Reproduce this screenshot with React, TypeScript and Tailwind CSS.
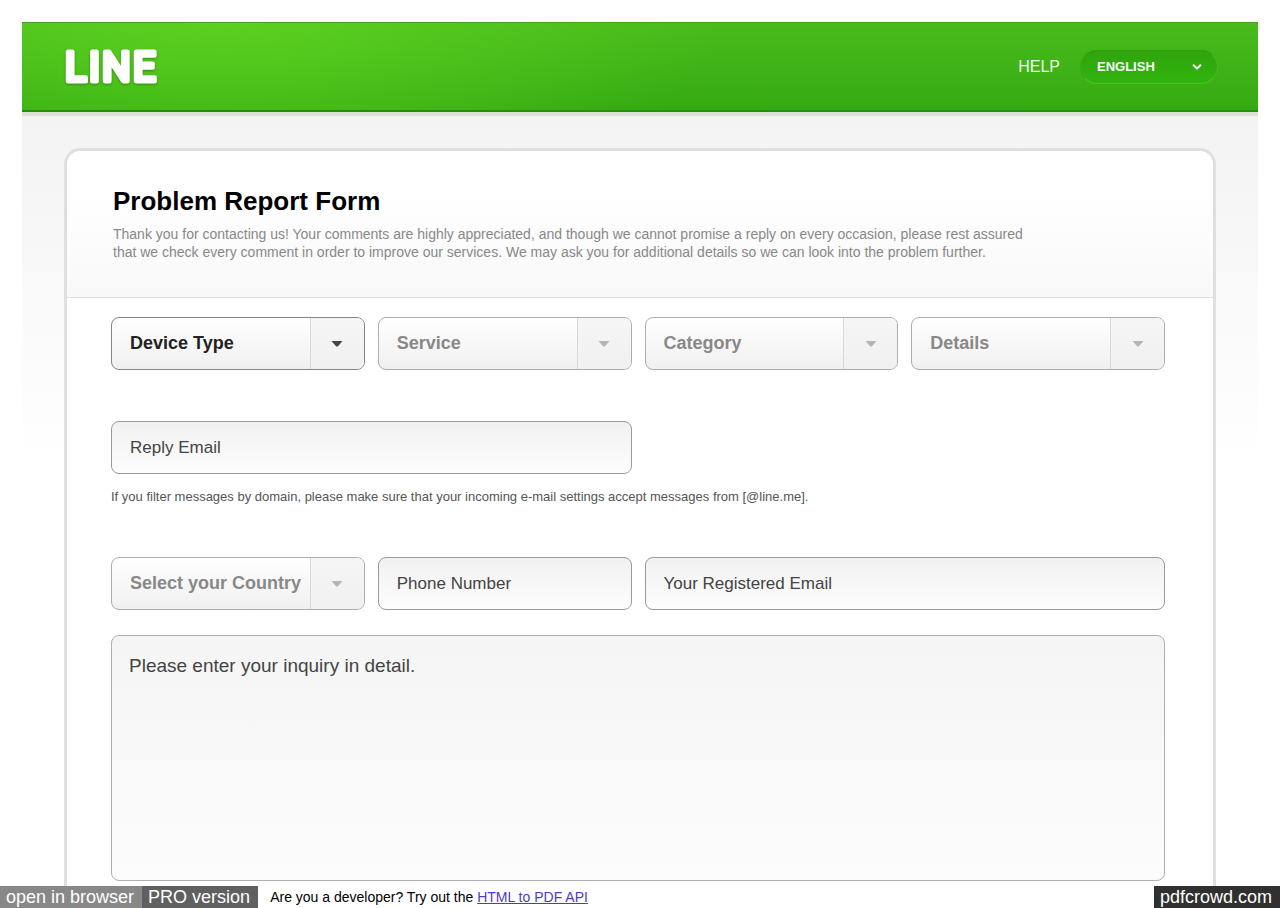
import { clsx } from "clsx";
import type { ComponentProps } from "react";

type SelectFieldProps = {
  id: string;
  label: string;
  disabled?: boolean;
};

function SelectField({ id, label, disabled }: SelectFieldProps) {
  return (
    <div
      className={clsx(
        "relative h-[53px] overflow-hidden rounded-lg border bg-linear-to-b from-white to-[#f0f0f0]",
        disabled ? "border-[#adadad]" : "border-[#858585]"
      )}
    >
      <select
        id={id}
        aria-label={label}
        disabled={disabled}
        className={clsx(
          "h-full w-full appearance-none bg-transparent pr-14 pb-0.5 pl-[18px] text-lg font-bold opacity-100 outline-none",
          disabled ? "text-[#888888]" : "text-[#222222]"
        )}
      >
        <option>{label}</option>
      </select>
      <span className="pointer-events-none absolute inset-y-0 right-0 flex w-[54px] items-center justify-center border-l border-[#d8d8d8] bg-linear-to-b from-[#f6f6f6] to-[#f0f0f0]">
        <svg
          width="12"
          height="6"
          viewBox="0 0 12 6"
          className={disabled ? "fill-[#b5b5b5]" : "fill-[#444444]"}
          aria-hidden="true"
        >
          <path d="M0.5 0h11L7 5.2Q6 6 5 5.2Z" />
        </svg>
      </span>
    </div>
  );
}

function TextField({ label, className, ...props }: ComponentProps<"input"> & { label: string }) {
  return (
    <input
      aria-label={label}
      placeholder={label}
      className={clsx(
        "block h-[53px] w-full rounded-lg border border-[#999999] bg-linear-to-b from-[#f1f1f1] to-[#fdfdfd] px-[18px] text-[17px] text-[#333333] outline-none placeholder:text-[#444444] placeholder:opacity-100",
        className
      )}
      {...props}
    />
  );
}

function Logo() {
  return (
    <a href="#" className="block">
      <svg
        width="104"
        height="46"
        viewBox="0 0 104 46"
        className="overflow-visible drop-shadow-[0_1px_1px_rgba(20,100,0,0.6)]"
      >
        <text
          y="37"
          x="1 25 38 69"
          fontFamily="Roboto, sans-serif"
          fontSize="40"
          fill="#ffffff"
          stroke="#ffffff"
          strokeWidth="5"
          strokeLinejoin="round"
        >
          LINE
        </text>
      </svg>
    </a>
  );
}

function Header() {
  return (
    <header className="flex h-[90px] items-center justify-between border-t border-b-2 border-t-[#3fa619] border-b-[#298c10] bg-[radial-gradient(ellipse_500px_180px_at_200px_0px,rgba(101,220,34,0.65),transparent),linear-gradient(to_bottom,#4abb1c,#34aa12)] pr-10 pl-[42px]">
      <Logo />
      <nav className="flex items-center gap-5">
        <a href="#" className="text-base text-[#f0ffe8]">
          HELP
        </a>
        <div className="relative h-[34px] w-[138px] rounded-full border border-t-[#2f9d0d] border-r-[#43bd1e] border-b-[#4cc426] border-l-[#38aa12] bg-linear-to-b from-[#2fa50d] to-[#33b30e]">
          <select
            id="language"
            aria-label="Language"
            className="h-full w-full appearance-none bg-transparent pl-4 text-[13px] font-bold text-white outline-none"
          >
            <option>ENGLISH</option>
          </select>
          <svg
            width="10"
            height="6"
            viewBox="0 0 10 6"
            className="pointer-events-none absolute top-[13px] right-[15px]"
            fill="none"
            stroke="#ffffff"
            strokeWidth="2"
            aria-hidden="true"
          >
            <path d="M1 0.8 5 4.4 9 0.8" />
          </svg>
        </div>
      </nav>
    </header>
  );
}

function ReportForm() {
  return (
    <form className="pt-[19px] pr-12 pb-[5px] pl-11" onSubmit={(e) => e.preventDefault()}>
      <div className="grid grid-cols-2 gap-[13px] lg:grid-cols-4">
        <SelectField id="device" label="Device Type" />
        <SelectField id="service" label="Service" disabled />
        <SelectField id="category" label="Category" disabled />
        <SelectField id="details" label="Details" disabled />
      </div>

      <div className="mt-[51px] grid grid-cols-2 gap-[13px]">
        <TextField id="reply-email" type="email" label="Reply Email" />
      </div>
      <p className="mt-3.5 text-[13px] leading-[18px] text-[#555555]">
        If you filter messages by domain, please make sure that your incoming e-mail settings accept messages from
        [@line.me].
      </p>

      <div className="mt-[51px] grid grid-cols-2 gap-[13px] lg:grid-cols-4">
        <SelectField id="country" label="Select your Country" disabled />
        <TextField id="phone" type="tel" label="Phone Number" />
        <TextField id="account-email" type="email" label="Your Registered Email" className="col-span-2" />
      </div>

      <textarea
        id="inquiry"
        aria-label="Inquiry"
        placeholder="Please enter your inquiry in detail."
        className="mt-[25px] block h-[246px] w-full resize-none rounded-lg border border-[#b0b0b0] bg-linear-to-b from-[#f5f5f5] to-[#fcfcfc] px-[17px] py-4 text-[19px] leading-7 text-[#333333] outline-none placeholder:text-[#444444] placeholder:opacity-100"
      />
    </form>
  );
}

function PdfBar() {
  return (
    <footer className="flex h-[22px] items-center bg-white text-lg leading-[22px] text-white">
      <a href="#" className="bg-[#888888] pr-2 pl-1.5">
        open in browser
      </a>
      <a href="#" className="bg-[#606060] pr-2 pl-1.5">
        PRO version
      </a>
      <p className="ml-3 text-sm leading-[22px] text-black">
        Are you a developer? Try out the{" "}
        <a href="#" className="text-[#4a3cc8] underline">
          HTML to PDF API
        </a>
      </p>
      <a href="#" className="ml-auto bg-[#303030] pr-2 pl-1.5">
        pdfcrowd.com
      </a>
    </footer>
  );
}

export default function App() {
  return (
    <div className="flex min-h-screen flex-col bg-white font-['Liberation_Sans',Arial,sans-serif]">
      <div className="mx-[22px] mt-[22px] flex flex-1 flex-col">
        <Header />
        <div className="flex flex-1 flex-col border-t-4 border-[#dcdfda] bg-[linear-gradient(to_bottom,#f3f3f3,#ffffff_350px)] px-[42px] pt-8">
          <main className="flex-1 rounded-t-2xl border-3 border-b-0 border-[#dfdfdf] bg-white">
            <div className="rounded-t-2xl border-b border-[#dddddd] bg-linear-to-b from-white from-30% to-[#f8f8f8] px-[46px] pt-[34px] pb-9">
              <h1 className="text-[26px] leading-8 font-bold text-black">Problem Report Form</h1>
              <p className="mt-2 max-w-[920px] text-sm leading-[18px] text-[#888888]">
                Thank you for contacting us! Your comments are highly appreciated, and though we cannot promise a reply
                on every occasion, please rest assured that we check every comment in order to improve our services. We
                may ask you for additional details so we can look into the problem further.
              </p>
            </div>
            <ReportForm />
          </main>
        </div>
      </div>
      <PdfBar />
    </div>
  );
}
